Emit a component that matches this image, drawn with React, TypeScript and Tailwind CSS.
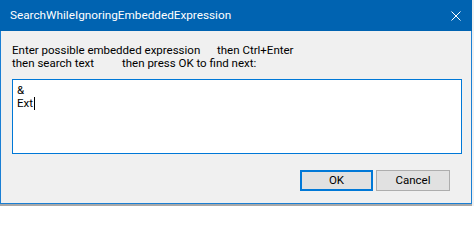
const font = { fontFamily: 'Roboto, "Liberation Sans", sans-serif' }

export default function App() {
  return (
    <div className="relative h-[206px] w-[474px] overflow-hidden bg-[#f0f0f0]" style={font}>
      <div className="flex h-[204px] w-[472px] flex-col border border-[#1a7fd4] bg-[#f0f0f0]">
        <div className="-mx-px -mt-px flex h-[31px] shrink-0 items-center justify-between bg-[#0063b1] pl-[10px] pr-[11px] text-white">
          <span className="whitespace-nowrap text-[11.75px] leading-none">SearchWhileIgnoringEmbeddedExpression</span>
          <svg width="10" height="10" viewBox="0 0 10 10">
            <path d="M0.5 0.5 L9.5 9.5 M9.5 0.5 L0.5 9.5" stroke="white" strokeWidth="1" fill="none" />
          </svg>
        </div>

        <div className="flex flex-1 flex-col px-[11px] pt-[13px]">
          <div className="whitespace-nowrap text-[11.5px] leading-[13px] text-black">
            <div className="flex">
              <span className="w-[205px] shrink-0">Enter possible embedded expression</span>
              <span>then Ctrl+Enter</span>
            </div>
            <div className="flex">
              <span className="w-[110px] shrink-0">then search text</span>
              <span>then press OK to find next:</span>
            </div>
          </div>

          <div className="mt-[9px] h-[75px] w-[450px] border border-[#0078d7] bg-white px-[4px] pt-[4px] text-[11.5px] leading-[13px] text-black">
            <div>&amp;</div>
            <div className="flex items-center">
              Ext<span className="ml-[1px] inline-block h-[13px] w-[1px] bg-black" />
            </div>
          </div>

          <div className="mt-[16px] flex justify-end gap-[3px] pr-[10px]">
            <button className="h-[21px] w-[73px] border-2 border-[#0078d7] bg-[#e1e1e1] text-[11.5px] leading-none text-black">
              OK
            </button>
            <button className="h-[21px] w-[74px] border border-[#adadad] bg-[#e1e1e1] text-[11.5px] leading-none text-black">
              Cancel
            </button>
          </div>
        </div>
      </div>
      <div className="h-[2px] w-[472px] bg-[#a8a8a8]" />
    </div>
  )
}
